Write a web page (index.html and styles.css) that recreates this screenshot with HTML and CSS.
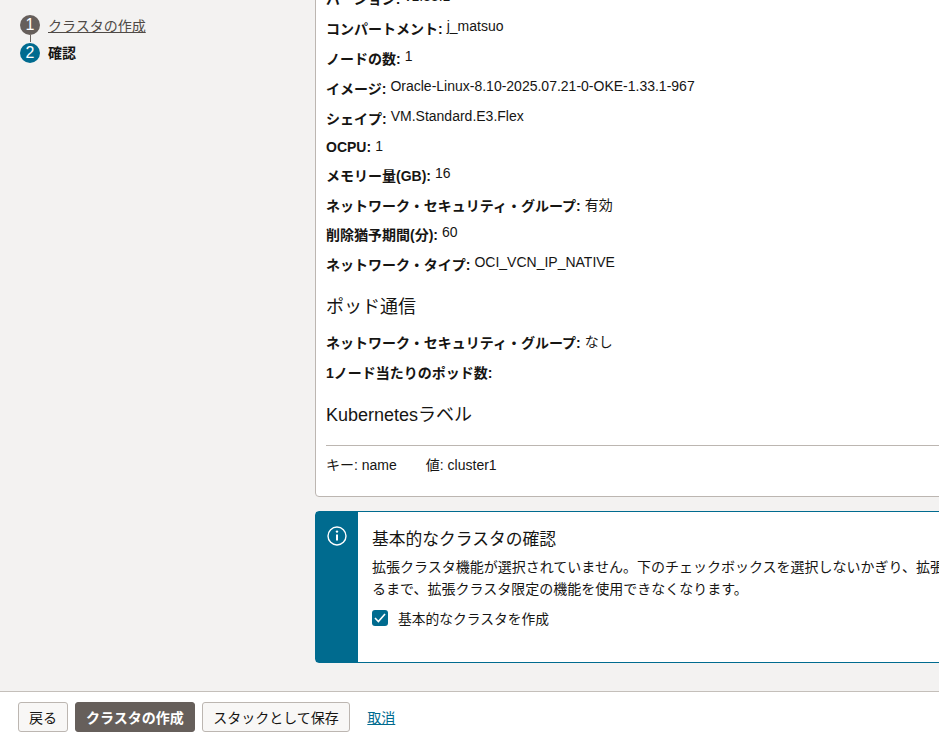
FILE: index.html
```html
<!DOCTYPE html>
<html lang="ja">
<head>
<meta charset="utf-8">
<title>クラスタの作成</title>
<link rel="stylesheet" href="styles.css">
</head>
<body>
<div class="page">
  <div class="content">
    <nav class="steps">
      <div class="step"><span class="num done">1</span><a class="step-link" href="#">クラスタの作成</a></div>
      <div class="step"><span class="num current">2</span><span class="step-cur">確認</span></div>
    </nav>
    <main class="main">
      <section class="card">
        <div class="row"><b>バージョン:</b><span>v1.33.1</span></div>
        <div class="row"><b>コンパートメント:</b><span>j_matsuo</span></div>
        <div class="row"><b>ノードの数:</b><span>1</span></div>
        <div class="row"><b>イメージ:</b><span>Oracle-Linux-8.10-2025.07.21-0-OKE-1.33.1-967</span></div>
        <div class="row"><b>シェイプ:</b><span>VM.Standard.E3.Flex</span></div>
        <div class="row flat r27"><b>OCPU:</b><span>1</span></div>
        <div class="row"><b>メモリー量(GB):</b><span>16</span></div>
        <div class="row flat r29"><b>ネットワーク・セキュリティ・グループ:</b><span>有効</span></div>
        <div class="row r29"><b>削除猶予期間(分):</b><span>60</span></div>
        <div class="row r31"><b>ネットワーク・タイプ:</b><span>OCI_VCN_IP_NATIVE</span></div>
        <h3 class="sub">ポッド通信</h3>
        <div class="row flat r31"><b>ネットワーク・セキュリティ・グループ:</b><span>なし</span></div>
        <div class="row r29"><b>1ノード当たりのポッド数:</b><span></span></div>
        <h3 class="sub k8s">Kubernetesラベル</h3>
        <div class="kv"><span>キー: name</span><span>値: cluster1</span></div>
      </section>
      <section class="banner">
        <div class="banner-side">
          <svg width="20" height="20" viewBox="0 0 20 20" fill="none" stroke="#fff" stroke-width="1.4"><circle cx="10" cy="10" r="9"/><path d="M10 8.5v6" stroke-width="2"/><circle cx="10" cy="5.6" r="1.2" fill="#fff" stroke="none"/></svg>
        </div>
        <div class="banner-body">
          <h4 class="banner-title">基本的なクラスタの確認</h4>
          <p class="banner-text">拡張クラスタ機能が選択されていません。下のチェックボックスを選択しないかぎり、拡張クラスタにアップグレードするまで、拡張クラスタ限定の機能を使用できなくなります。</p>
          <label class="check">
            <span class="box"><svg width="12" height="10" viewBox="0 0 12 10" fill="none" stroke="#fff" stroke-width="1.6"><path d="M1 5l3.4 3.6L11 1"/></svg></span>
            基本的なクラスタを作成
          </label>
        </div>
      </section>
    </main>
  </div>
  <footer class="footer">
    <button class="btn">戻る</button>
    <button class="btn primary">クラスタの作成</button>
    <button class="btn wide">スタックとして保存</button>
    <a class="cancel" href="#">取消</a>
  </footer>
</div>
</body>
</html>
```
FILE: styles.css
```css
* { box-sizing: border-box; }
html, body { margin: 0; height: 100%; overflow: hidden; }
body {
  font-family: "Liberation Sans", "Noto Sans CJK JP", sans-serif;
  font-size: 14px;
  color: #161513;
  background: #f3f2f1;
}
.page { display: flex; flex-direction: column; height: 739px; width: 939px; overflow: hidden; }
.content { flex: 1; display: flex; min-height: 0; overflow: hidden; }
.steps { width: 315px; flex: none; padding: 15px 0 0 20px; }
.step { display: flex; align-items: center; gap: 8px; height: 20px; margin-bottom: 7px; position: relative; }
.step:first-child::after { content: ""; position: absolute; left: 9.5px; top: 20px; width: 1px; height: 7px; background: #6b6560; }
.num { width: 20px; height: 20px; border-radius: 50%; color: #fff; font-weight: 400; display: flex; align-items: center; justify-content: center; font-size: 16px; }
.num.done { background: #665f5b; }
.num.current { background: #006b8f; margin-top: 1px; }
.step-link { color: #4f4a46; }
.step-cur { font-weight: 700; }
.main { width: 900px; flex: none; margin-top: -18px; }
.card { background: #fff; border: 1px solid #bcb6b1; border-radius: 4px; padding: 0 0 16px 10px; height: 515px; }
.row { display: flex; gap: 4px; height: 30px; align-items: center; }
.row.r27 { height: 27px; }
.row.r29 { height: 29.3px; }
.row.r31 { height: 31px; }
.row b { font-weight: 700; }
.row span { position: relative; top: -2px; }
.row.flat span { top: -1px; }
.sub { font-size: 18px; font-weight: 400; margin: 14px 0 7px; line-height: 26px; }
.k8s { margin: 15px 0 8px; border-bottom: 1px solid #bcb6b1; padding-bottom: 17px; }
.kv { display: flex; gap: 29px; }
.banner { display: flex; margin-top: 14px; height: 152px; border: 1px solid #006b8f; border-radius: 4px; background: #fff; }
.banner-side { width: 42px; background: #006b8f; display: flex; justify-content: center; align-items: flex-start; padding-top: 14px; flex: none; }
.banner-body { padding: 16px 14px; flex: 1; }
.banner-title { font-size: 16.75px; font-weight: 400; margin: 0 0 4px; line-height: 24px; }
.banner-text { margin: 0 0 8px; font-size: 14px; line-height: 22px; width: 756px; }
.check { display: flex; align-items: center; gap: 10px; font-size: 13.75px; }
.box { width: 16px; height: 16px; border-radius: 3px; background: #006b8f; display: flex; align-items: center; justify-content: center; }
.footer { height: 48px; flex: none; background: #fff; border-top: 1px solid #c4bfba; display: flex; align-items: center; padding: 2px 18px 0; gap: 7px; }
.btn { height: 30px; font: 14px "Liberation Sans", "Noto Sans CJK JP", sans-serif; padding: 0 10px; background: #f8f7f6; border: 1px solid #bcb6b1; border-radius: 3px; color: #161513; }
.btn.wide { padding: 0 10.5px; }
.btn.primary { background: #665f5b; border-color: #665f5b; color: #fff; font-weight: 700; }
.cancel { color: #006b8f; margin-left: 10px; }
```
